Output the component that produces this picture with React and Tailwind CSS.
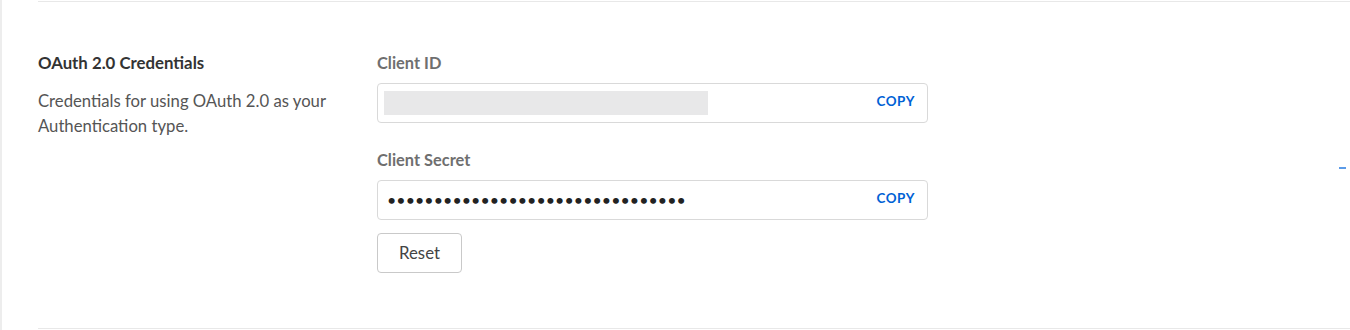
export default function App() {
  const dots = "•".repeat(32);
  return (
    <div className="w-[1350px] h-[330px] bg-white border-l-2 border-[#ededed] font-['Lato','Open_Sans',sans-serif] overflow-hidden">
      <div className="ml-[36px] mt-px h-[328px] border-t border-b border-[#e8e8e8] flex pt-[50px]">
        <div className="w-[339px] shrink-0">
          <h3 className="text-[16.8px] leading-[21px] font-bold text-[#333]">OAuth 2.0 Credentials</h3>
          <p className="mt-[16px] text-[16.7px] leading-[25px] text-[#555] w-[300px]">
            Credentials for using OAuth 2.0 as your Authentication type.
          </p>
        </div>
        <div className="w-[551px] flex flex-col">
          <label className="text-[16.4px] leading-[21px] font-bold text-[#6f6f6f]">Client ID</label>
          <div className="mt-[10px] h-[40px] border border-[#d9d9d9] rounded-[4px] flex items-center pl-[6px] pr-[12px]">
            <div className="w-[324px] h-[24px] bg-[#e8e8e9]" />
            <span className="ml-auto mb-[4px] text-[13.4px] font-bold tracking-[0.6px] text-[#0061d5]">COPY</span>
          </div>
          <label className="mt-[26px] text-[16.4px] leading-[21px] font-bold text-[#6f6f6f]">Client Secret</label>
          <div className="mt-[10px] h-[40px] border border-[#d9d9d9] rounded-[4px] flex items-center pl-[9px] pr-[12px]">
            <span className="text-[16px] text-[#222] tracking-[0.06px]">{dots}</span>
            <span className="ml-auto mb-[4px] text-[13.4px] font-bold tracking-[0.6px] text-[#0061d5]">COPY</span>
          </div>
          <button className="mt-[13px] w-[85px] h-[40px] border border-[#c9c9c9] rounded-[4px] text-[16.8px] text-[#444] bg-white">
            Reset
          </button>
        </div>
        <div className="flex-1 relative">
          <div className="absolute right-[4px] top-[115px] w-[7px] h-[2px] bg-[#5b9be8]" />
        </div>
      </div>
    </div>
  );
}
